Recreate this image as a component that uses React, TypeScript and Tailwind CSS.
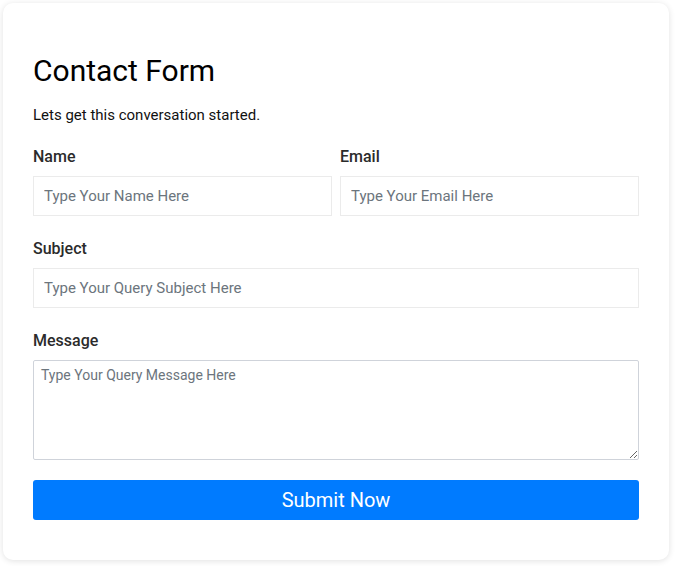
export default function App() {
  return (
    <div className="min-h-[566px] bg-white pl-[3px] pt-[3px] font-['Roboto',sans-serif]">
      <div className="w-[666px] h-[557px] rounded-[10px] bg-white px-[30px] pt-[50px] shadow-[0_1px_6px_rgba(0,0,0,0.12)]">
        <h1 className="text-[30px] leading-[36px] font-normal text-black">Contact Form</h1>
        <p className="mt-[16px] text-[15px] leading-[20px] text-[#111]">Lets get this conversation started.</p>

        <form className="mt-[22px]" onSubmit={(e) => e.preventDefault()}>
          <div className="flex gap-[8px]">
            <div className="flex-1">
              <label className="block text-[16px] leading-[20px] font-medium text-[#2b2b2b]">Name</label>
              <input
                className="mt-[9px] h-[40px] w-full border border-[#ebebeb] px-[10px] text-[15px] outline-none placeholder:text-[#6c757d]"
                placeholder="Type Your Name Here"
              />
            </div>
            <div className="flex-1">
              <label className="block text-[16px] leading-[20px] font-medium text-[#2b2b2b]">Email</label>
              <input
                className="mt-[9px] h-[40px] w-full border border-[#ebebeb] px-[10px] text-[15px] outline-none placeholder:text-[#6c757d]"
                placeholder="Type Your Email Here"
              />
            </div>
          </div>

          <label className="mt-[23px] block text-[16px] leading-[20px] font-medium text-[#2b2b2b]">Subject</label>
          <input
            className="mt-[9px] h-[40px] w-full border border-[#ebebeb] px-[10px] text-[15px] outline-none placeholder:text-[#6c757d]"
            placeholder="Type Your Query Subject Here"
          />

          <label className="mt-[23px] block text-[16px] leading-[20px] font-medium text-[#2b2b2b]">Message</label>
          <textarea
            className="mt-[9px] block h-[100px] w-full rounded-[2px] border border-[#cfd3da] px-[7px] py-[4px] text-[14px] outline-none placeholder:text-[#6c757d]"
            placeholder="Type Your Query Message Here"
          />

          <button
            type="submit"
            className="mt-[20px] h-[40px] w-full rounded-[3px] bg-[#007bff] text-[20px] text-white"
          >
            Submit Now
          </button>
        </form>
      </div>
    </div>
  )
}
